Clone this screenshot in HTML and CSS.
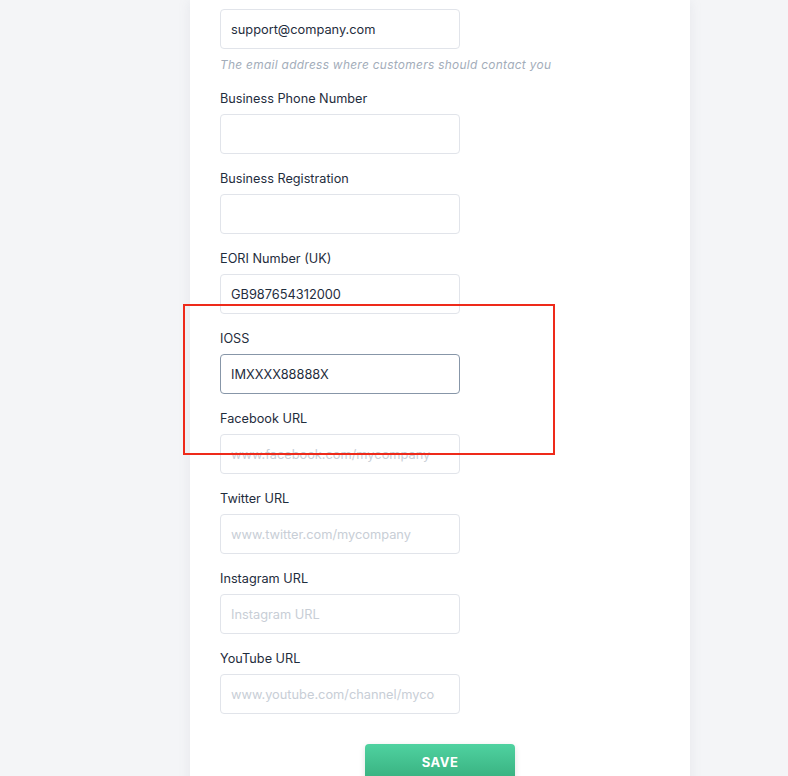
FILE: index.html
```html
<!DOCTYPE html>
<html>
<head>
<meta charset="utf-8">
<link rel="stylesheet" href="styles.css">
</head>
<body>
<div class="page">
  <div class="card">
    <div class="field">
      <input class="input" type="text" value="support@company.com">
      <div class="help">The email address where customers should contact you</div>
    </div>
    <div class="field">
      <label class="label">Business Phone Number</label>
      <input class="input" type="text">
    </div>
    <div class="field">
      <label class="label">Business Registration</label>
      <input class="input" type="text">
    </div>
    <div class="field">
      <label class="label">EORI Number (UK)</label>
      <input class="input" type="text" value="GB987654312000">
    </div>
    <div class="field">
      <label class="label">IOSS</label>
      <input class="input focus" type="text" value="IMXXXX88888X">
    </div>
    <div class="field">
      <label class="label">Facebook URL</label>
      <input class="input" type="text" placeholder="www.facebook.com/mycompany">
    </div>
    <div class="field">
      <label class="label">Twitter URL</label>
      <input class="input" type="text" placeholder="www.twitter.com/mycompany">
    </div>
    <div class="field">
      <label class="label">Instagram URL</label>
      <input class="input" type="text" placeholder="Instagram URL">
    </div>
    <div class="field">
      <label class="label">YouTube URL</label>
      <input class="input" type="text" placeholder="www.youtube.com/channel/mycompany">
    </div>
    <div class="actions">
      <button class="save">SAVE</button>
    </div>
  </div>
  <div class="highlight"></div>
</div>
</body>
</html>
```
FILE: styles.css
```css
html, body {
  margin: 0;
  padding: 0;
  background: #f4f5f7;
  font-family: Inter, "Open Sans", sans-serif;
  color: #1f2d3d;
  overflow: hidden;
}
.page {
  position: relative;
  width: 788px;
  height: 776px;
}
.card {
  margin-left: 190px;
  width: 500px;
  box-sizing: border-box;
  background: #ffffff;
  padding: 9px 30px 0 30px;
  min-height: 820px;
  box-shadow: 0 0 12px rgba(120, 135, 160, 0.12);
}
.field {
  display: flex;
  flex-direction: column;
  align-items: flex-start;
  margin-bottom: 14px;
}
.label {
  font-size: 12.7px;
  line-height: 21px;
  height: 20px;
  margin-bottom: 6px;
  color: #1f2d3d;
}
.input {
  width: 240px;
  height: 40px;
  box-sizing: border-box;
  border: 1px solid #e1e4ea;
  border-radius: 4px;
  padding: 1px 24px 0 10px;
  font-family: inherit;
  font-size: 12.8px;
  color: #1f2d3d;
  background: #fff;
  outline: none;
}
.input::placeholder {
  color: #c8ced6;
}
.input.focus {
  border-color: #8796a8;
}
.help {
  margin-top: 7px;
  font-size: 11.9px;
  line-height: 17px;
  font-style: italic;
  color: #a3adba;
  letter-spacing: 0.3px;
  margin-bottom: 1px;
}
.actions {
  display: flex;
  justify-content: center;
  padding-top: 16px;
}
.save {
  width: 150px;
  height: 36px;
  border: none;
  border-radius: 4px;
  background: linear-gradient(#4fd2a0, #38b07f);
  color: #fff;
  font-family: inherit;
  font-weight: 700;
  font-size: 13px;
  letter-spacing: 0.5px;
  box-shadow: 0 2px 6px rgba(0,0,0,0.12);
}
.highlight {
  position: absolute;
  left: 183px;
  top: 304px;
  width: 372px;
  height: 151px;
  box-sizing: border-box;
  border: 2px solid #ee2a1a;
}
```
